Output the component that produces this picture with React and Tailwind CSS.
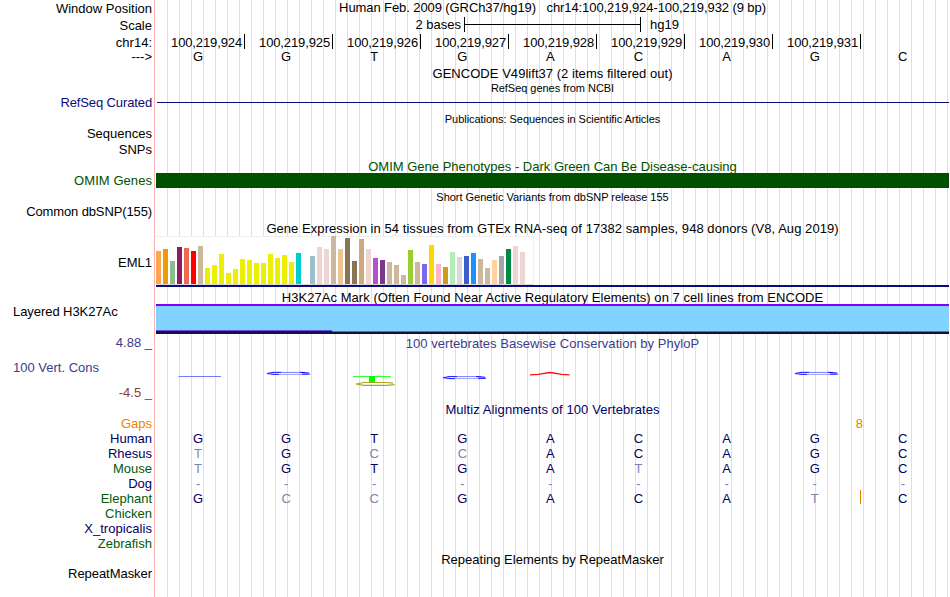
import React from 'react';
import clsx from 'clsx';

const labels = [
  { text: 'Window Position', className: 'mt-px' },
  { text: 'Scale', className: 'mt-0.5' },
  { text: 'chr14:', className: 'mt-0.5' },
  { text: '--->', className: '-mt-px' },
  { text: 'RefSeq Curated', className: 'mt-[31px] tracking-[-0.12px] text-[#0c0c78]' },
  { text: 'Sequences', className: 'mt-4' },
  { text: 'SNPs', className: 'mt-px' },
  { text: 'OMIM Genes', className: 'mt-4 tracking-[0.06px] text-[#005000]' },
  { text: 'Common dbSNP(155)', className: 'mt-4 tracking-[-0.12px]' },
  { text: 'EML1', className: 'mt-9' },
  { text: 'Layered H3K27Ac', className: 'mt-[34px] self-start pl-[13px] tracking-[-0.06px]' },
  { text: '4.88 _', className: 'mt-4 text-[#3c3c8c]' },
  { text: '100 Vert. Cons', className: 'mt-2.5 self-start pl-[13px] text-[#3c3c8c]' },
  { text: '-4.5 _', className: 'mt-2.5 text-[#8c3c3c]' },
  { text: 'Gaps', className: 'mt-4 text-[#e68600]' },
  { text: 'Human', className: 'text-[#000064]' },
  { text: 'Rhesus', className: 'text-[#000064]' },
  { text: 'Mouse', className: 'text-[#005a0a]' },
  { text: 'Dog', className: 'text-[#000064]' },
  { text: 'Elephant', className: 'text-[#005a0a]' },
  { text: 'Chicken', className: 'text-[#005a0a]' },
  { text: 'X_tropicalis', className: 'tracking-[0.05px] text-[#000064]' },
  { text: 'Zebrafish', className: 'text-[#005a0a]' },
  { text: 'RepeatMasker', className: 'mt-[15px] tracking-[-0.05px]' },
];

const positions = [
  '100,219,924', '100,219,925', '100,219,926', '100,219,927',
  '100,219,928', '100,219,929', '100,219,930', '100,219,931',
];

const reference = 'GGTGACAGC';

const alignments = [
  { species: 'human', bases: 'GGTGACAGC' },
  { species: 'rhesus', bases: 'TGCCACAGC' },
  { species: 'mouse', bases: 'TGTGATAGC' },
  { species: 'dog', bases: '---------' },
  { species: 'elephant', bases: 'GCCGACATC' },
];

// GTEx tissues in track order: [height, color]
const tissues = [
  [33, '#ffa54f'], [35, '#ee9a00'], [23, '#8fbc8f'], [37, '#8b1c62'],
  [36, '#ee6a50'], [33, '#ff0000'], [38, '#cdb79e'], [16, '#eeee00'],
  [19, '#eeee00'], [30, '#eeee00'], [11, '#eeee00'], [15, '#eeee00'],
  [25, '#eeee00'], [24, '#eeee00'], [21, '#eeee00'], [21, '#eeee00'],
  [30, '#eeee00'], [26, '#eeee00'], [29, '#eeee00'], [22, '#eeee00'],
  [31, '#00cdcd'], [0, '#ee82ee'], [28, '#9ac0cd'], [37, '#eed5d2'],
  [35, '#eed5d2'], [48, '#cdb79e'], [35, '#eec591'], [46, '#8b7355'],
  [23, '#8b7355'], [45, '#cdaa7d'], [35, '#eed5d2'], [26, '#b452cd'],
  [24, '#7a378b'], [22, '#cdb79e'], [19, '#cdb79e'], [9, '#cdb79e'],
  [34, '#9acd32'], [22, '#cdb79e'], [20, '#7a67ee'], [39, '#ffd700'],
  [20, '#ffb6c1'], [17, '#cd9b1d'], [32, '#b4eeb4'], [27, '#d9d9d9'],
  [28, '#3a5fcd'], [31, '#1e90ff'], [25, '#cdb79e'], [16, '#cdb79e'],
  [24, '#ffd39b'], [28, '#a6a6a6'], [35, '#008b45'], [38, '#eed5d2'],
  [32, '#eed5d2'], [0, '#ff00ff'],
];

const Title = ({ children, className }) => (
  <div className={clsx('h-[15px] shrink-0 whitespace-pre text-center', className)}>{children}</div>
);

const SmallTitle = ({ children, className }) => (
  <div className={clsx('h-3 shrink-0 whitespace-pre text-center text-[11px] leading-3', className)}>{children}</div>
);

const BaseRow = ({ bases, className, compare }) => (
  <div className={clsx('-ml-0.5 flex h-[15px] w-[793px] shrink-0', className)}>
    {bases.split('').map((base, index) => (
      <span
        key={index}
        className={clsx(
          'w-[88.1px] text-center',
          compare && (base === reference[index] ? 'text-[#000064]' : 'text-[#8080b1]')
        )}
      >
        {base}
      </span>
    ))}
  </div>
);

// A "G" from the sequence logo, flattened by a low score
const FlatG = ({ x, y }) => (
  <g transform={`translate(${x} ${y})`} fill="none">
    <path d="M5 0.9H38" stroke="#7c7cff" strokeWidth="1" />
    <path d="M4 2.9H40" stroke="#a0a0ff" strokeWidth="1" />
    <path d="M0 2L6 0.9H14M0 2L7 2.9H12" stroke="#2020ff" strokeWidth="1" />
    <path d="M33 0.8L42 1.5M35 2.6H43" stroke="#1010ff" strokeWidth="1" />
  </g>
);

const Conservation = () => (
  <svg width="793" height="51" viewBox="156 351 793 51" className="block shrink-0">
    <path d="M178.5 376.5H221" stroke="#6a6aff" strokeWidth="0.9" />
    <FlatG x={267} y={371.5} />
    <path d="M353 376.5H391" stroke="#30ff30" />
    <rect x="369" y="376" width="6" height="6" fill="#00ff00" />
    <path
      d="M393 383.2L386 382.5H364L356 384L364 385.4H387L394.5 384.6"
      fill="none"
      stroke="#aaa51e"
      strokeWidth="1.2"
    />
    <FlatG x={443} y={375.7} />
    <path d="M530 374.8L538 374.3L550 372.5L562 374.3L569.5 374.8" fill="none" stroke="#ff1010" strokeWidth="1.3" />
    <FlatG x={795} y={371.5} />
  </svg>
);

const ExpressionGraph = () => (
  <div className="flex h-[49px] w-[378px] shrink-0 items-end gap-0.5 border-t border-r border-b border-t-[#f0f0f0] border-r-[#f0f0f0] border-b-[#d8d8d8] bg-white">
    {tissues.map(([height, color], index) => (
      <div key={index} className="w-[5px] shrink-0" style={{ height, backgroundColor: color }} />
    ))}
  </div>
);

const App = () => {
  return (
    <div className="flex h-[597px] w-[950px] overflow-hidden bg-white font-['Liberation_Sans',Arial,sans-serif] text-[13px] leading-[15px] text-black">
      {/* Track labels */}
      <div className="flex w-[155px] shrink-0 flex-col items-end border-r border-[#ffb4b4] pr-0.5">
        {labels.map(({ text, className }) => (
          <div key={text} className={clsx('h-[15px] shrink-0 whitespace-pre', className)}>{text}</div>
        ))}
      </div>

      {/* Track images */}
      <div className="ml-px flex w-[793px] shrink-0 flex-col bg-[linear-gradient(to_right,#dcdcf8_1px,transparent_1px)] bg-[length:12px_100%] bg-[position:11px_0]">
        <Title className="tracking-[-0.09px]">Human Feb. 2009 (GRCh37/hg19)   chr14:100,219,924-100,219,932 (9 bp)</Title>

        <div className="mt-0.5 flex h-[15px] shrink-0">
          <span className="w-[305px] text-right">2 bases</span>
          <div className="ml-[3px] flex w-[177px] items-center border-x border-black">
            <div className="h-px w-full bg-black" />
          </div>
          <span className="ml-[9px]">hg19</span>
        </div>

        <div className="mt-0.5 ml-px flex h-[15px] shrink-0 tracking-[-0.12px]">
          {positions.map((position) => (
            <div key={position} className="w-[88px] border-r border-black pt-px pr-0.5 text-right">{position}</div>
          ))}
        </div>
        <BaseRow bases={reference} />

        <Title className="mt-0.5 tracking-[0.04px]">GENCODE V49lift37 (2 items filtered out)</Title>
        <SmallTitle className="mt-px tracking-[-0.04px]">RefSeq genes from NCBI</SmallTitle>
        <div className="mt-2 ml-px h-px shrink-0 bg-[#0c0c78]" />

        <SmallTitle className="mt-2.5 tracking-[-0.05px]">Publications: Sequences in Scientific Articles</SmallTitle>

        <Title className="mt-[34px] -mb-px text-[#005000]">OMIM Gene Phenotypes - Dark Green Can Be Disease-causing</Title>
        <div className="h-[15px] shrink-0 bg-[#005000]" />

        <SmallTitle className="mt-[3px] tracking-[-0.02px]">Short Genetic Variants from dbSNP release 155</SmallTitle>

        <Title className="mt-[18px] tracking-[0.055px]">Gene Expression in 54 tissues from GTEx RNA-seq of 17382 samples, 948 donors (V8, Aug 2019)</Title>
        <ExpressionGraph />
        <div className="h-0.5 shrink-0 bg-[#0c0c78]" />

        <Title className="mt-[3px] -mb-px tracking-[0.045px]">H3K27Ac Mark (Often Found Near Active Regulatory Elements) on 7 cell lines from ENCODE</Title>
        <div className="flex h-[30px] shrink-0 items-end border-t-2 border-[#8000ff] bg-[#80d4ff]">
          <div className="h-1 w-44 border-t border-[#6650e8] bg-[#14104a]" />
          <div className="h-[3px] flex-1 border-t border-[#5068d8] bg-[#14103a]" />
        </div>

        <Title className="mt-0.5 tracking-[0.03px] text-[#3c3c8c]">100 vertebrates Basewise Conservation by PhyloP</Title>
        <Conservation />

        <Title className="-mb-px tracking-[0.09px] text-[#000064]">Multiz Alignments of 100 Vertebrates</Title>
        <div className="h-[15px] w-[707px] shrink-0 text-right text-[#e68600]">8</div>
        {alignments.map(({ species, bases }) => (
          <div key={species} className="flex shrink-0">
            <BaseRow bases={bases} compare />
            {species === 'elephant' && <div className="-ml-[87px] mt-[-1px] h-3.5 w-px bg-[#e68600]" />}
          </div>
        ))}

        <Title className="mt-[46px]">Repeating Elements by RepeatMasker</Title>
      </div>
    </div>
  );
};

export default App;
